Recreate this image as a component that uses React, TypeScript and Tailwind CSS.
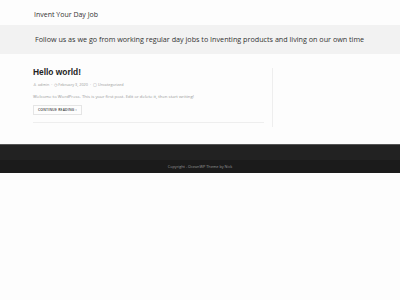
export default function App() {
  return (
    <div className="w-[400px] h-[300px] bg-[#fdfdfd] overflow-hidden" style={{ fontFamily: '"Open Sans", sans-serif' }}>
      {/* Header */}
      <header className="h-[25px] flex items-center pl-[34px] pt-[3px]">
        <span className="text-[7px] text-[#333] leading-none">Invent Your Day Job</span>
      </header>

      {/* Tagline band */}
      <div className="h-[29px] bg-[#f2f2f2] flex items-center pl-[35px]">
        <span className="text-[7.2px] text-[#333] leading-none whitespace-nowrap">
          Follow us as we go from working regular day jobs to Inventing products and living on our own time
        </span>
      </div>

      {/* Main */}
      <div className="h-[90px] pt-[14px]">
        <div className="w-[273px] h-[59px] pl-[33px] pr-[8px] flex flex-col border-r border-[#eee]">
          <h1 className="text-[8.4px] font-bold text-[#222] leading-none" style={{ fontFamily: '"Liberation Sans", sans-serif' }}>
            Hello world!
          </h1>
          <div className="mt-[7px] text-[3.8px] text-[#999] flex items-center gap-[2px] leading-none">
            <span>♙ admin</span><span>·</span><span>◷ February 3, 2020</span><span>·</span><span>▢ Uncategorized</span>
          </div>
          <p className="mt-[7px] text-[4.3px] text-[#999] leading-none">
            Welcome to WordPress. This is your first post. Edit or delete it, then start writing!
          </p>
          <div className="mt-[6px] flex">
            <span className="flex items-center h-[10px] px-[4px] border border-[#e5e5e5] text-[3.4px] text-[#333] font-semibold tracking-[0.2px] leading-none">
              CONTINUE READING ›
            </span>
          </div>
          <div className="mt-auto mb-[4px] border-b border-[#eee]"></div>
        </div>
      </div>

      {/* Footer */}
      <footer className="border-t border-[#555]">
        <div className="h-[15px] bg-[#222]"></div>
        <div className="h-[13px] bg-[#1b1b1b] flex items-center justify-center">
          <span className="text-[3.8px] text-[#999] leading-none">Copyright - OceanWP Theme by Nick</span>
        </div>
      </footer>
    </div>
  )
}
